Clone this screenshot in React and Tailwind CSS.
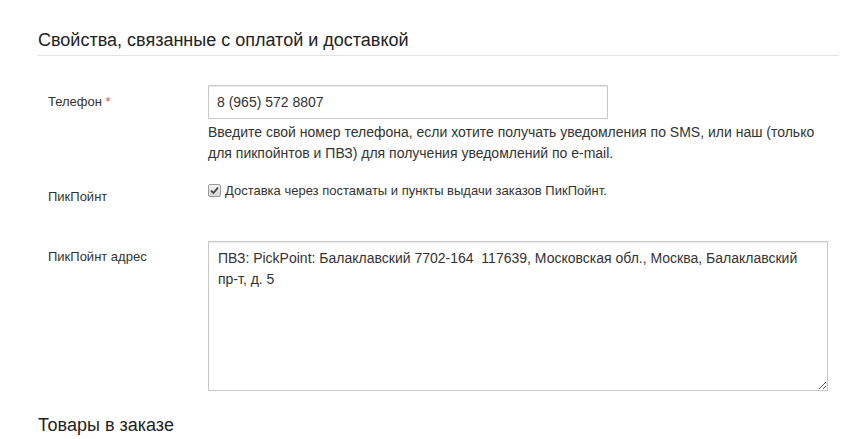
export default function App() {
  return (
    <div className="w-[865px] h-[439px] bg-white overflow-hidden pl-[38px] pr-[26px] pt-[27px] font-['Liberation_Sans',Arial,sans-serif] text-[#333]">
      <h2 className="text-[18px] leading-[27px] text-[#222] border-b border-[#e3e3e3] pb-[1px]">
        Свойства, связанные с оплатой и доставкой
      </h2>

      <div className="mt-[29px] flex">
        <label className="w-[170px] pl-[10px] text-[13px] leading-[20px] pt-[7px]">
          Телефон <span className="text-[#d9534f]">*</span>
        </label>
        <div>
          <input
            type="text"
            defaultValue="8 (965) 572 8807"
            className="w-[400px] h-[34px] border border-[#c8c8c8] rounded-[1px] px-[8px] text-[14px] text-[#333] shadow-[inset_0_1px_1px_rgba(0,0,0,0.08)] outline-none"
          />
          <p className="mt-[3px] text-[14px] leading-[21px] w-[630px]">
            Введите свой номер телефона, если хотите получать уведомления по SMS, или наш (только для пикпойнтов и ПВЗ) для получения уведомлений по e-mail.
          </p>
        </div>
      </div>

      <div className="mt-[17px] flex items-start">
        <div className="w-[170px] pl-[10px] text-[13px] leading-[20px] pt-[6px]">ПикПойнт</div>
        <label className="flex items-center gap-[4px] text-[13px] leading-[20px]">
          <span className="w-[13px] h-[13px] border border-[#9a9a9a] rounded-[2px] bg-gradient-to-b from-[#f2f2f2] to-[#d6d6d6] flex items-center justify-center -mt-[1px]">
            <svg width="9" height="9" viewBox="0 0 9 9">
              <path d="M1 4.6 L3.4 7 L8 1.6" fill="none" stroke="#444" strokeWidth="1.8" />
            </svg>
          </span>
          Доставка через постаматы и пункты выдачи заказов ПикПойнт.
        </label>
      </div>

      <div className="mt-[34px] flex">
        <div className="w-[170px] pl-[10px] text-[13px] leading-[20px] pt-[6px]">ПикПойнт адрес</div>
        <textarea
          defaultValue="ПВЗ: PickPoint: Балаклавский 7702-164  117639, Московская обл., Москва, Балаклавский пр-т, д. 5"
          className="w-[620px] h-[150px] border border-[#c8c8c8] px-[9px] pt-[6px] text-[14px] leading-[21px] text-[#333] shadow-[inset_0_1px_1px_rgba(0,0,0,0.08)] outline-none resize"
        />
      </div>

      <h2 className="mt-[21px] text-[18px] leading-[26px] text-[#222]">Товары в заказе</h2>
    </div>
  );
}
